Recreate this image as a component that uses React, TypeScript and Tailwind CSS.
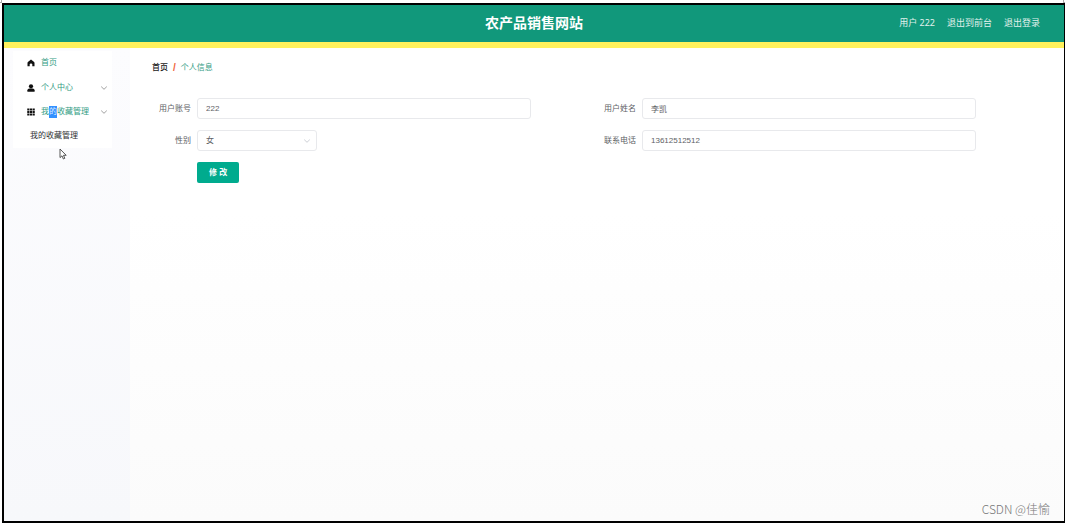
import type { ReactNode } from 'react';

function Chevron({ className }: { className: string }) {
  return (
    <svg viewBox="0 0 8 8" className={className} fill="none" stroke="currentColor" strokeWidth="0.8" aria-hidden="true">
      <path d="M1.2 2.6 4 5.3 6.8 2.6" />
    </svg>
  );
}

function HomeIcon() {
  return (
    <svg viewBox="0 0 16 16" className="size-2 shrink-0" fill="#111" aria-hidden="true">
      <path d="M8 0.8 14.2 6.2Q15 7 15 8.2V14.6H10.6V10.6Q10.6 9 8 9T5.4 10.6V14.6H1V8.2Q1 7 1.8 6.2Z" />
    </svg>
  );
}

function UserIcon() {
  return (
    <svg viewBox="0 0 16 16" className="size-2 shrink-0" fill="#111" aria-hidden="true">
      <circle cx="8" cy="4.6" r="4.2" />
      <path d="M0.8 15.4V12.4Q0.8 9.4 5 9.2H11Q15.2 9.4 15.2 12.4V15.4Z" />
    </svg>
  );
}

function GridIcon() {
  return (
    <svg viewBox="0 0 16 16" className="size-2 shrink-0" fill="#111" aria-hidden="true">
      <path d="M0.5 1H5V5H0.5ZM6 1H10V5H6ZM11 1H15.5V5H11ZM0.5 6H5V10H0.5ZM6 6H10V10H6ZM11 6H15.5V10H11ZM0.5 11H5V15H0.5ZM6 11H10V15H6ZM11 11H15.5V15H11Z" />
    </svg>
  );
}

function MenuRow({ icon, children, expandable }: { icon: ReactNode; children: ReactNode; expandable?: boolean }) {
  return (
    <button type="button" className="flex h-6 w-full items-center bg-white pl-3.5 pr-1 text-left text-[#339c84]">
      {icon}
      <span className="ml-1.5 flex-1 whitespace-nowrap">{children}</span>
      {expandable && <Chevron className="size-2 text-[#888]" />}
    </button>
  );
}

const fieldStyle =
  'h-[21px] rounded-[3px] border border-[#e8e9ec] bg-white px-2 text-[8px] text-[#606266] outline-none';

function Field({ id, label, children }: { id: string; label: string; children: ReactNode }) {
  return (
    <div className="flex items-center">
      <label htmlFor={id} className="w-[45px] shrink-0 pr-1.5 text-right text-[#606266]">
        {label}
      </label>
      {children}
    </div>
  );
}

export default function App() {
  return (
    <div className="relative flex min-h-screen flex-col bg-white pb-px pl-0.5 pt-[3px] font-['Liberation_Sans','Noto_Sans_CJK_SC',sans-serif] text-[8px] leading-3">
      <span className="absolute left-0 top-0 h-[3px] w-0.5 border-b border-r border-[#aaa]" />
      <span className="absolute right-0 top-0 h-[3px] w-0.5 border-b border-l border-[#aaa]" />
      <div className="flex flex-1 flex-col border-2 border-r border-black bg-linear-to-b from-white from-40% to-[#fbfbfb]">
        <header className="grid h-[43px] grid-cols-[1fr_auto_1fr] items-center border-b-6 border-[#fff15c] bg-[#11987b] pb-px text-white">
          <h1 className="col-start-2 text-sm font-bold">农产品销售网站</h1>
          <nav className="flex justify-end gap-3 pr-6 font-['Noto_Sans','Noto_Sans_CJK_SC',sans-serif] text-[9px] text-[#e0f1ec]">
            <span>用户 222</span>
            <a href="#front">退出到前台</a>
            <a href="#logout">退出登录</a>
          </nav>
        </header>

        <div className="flex flex-1">
          <aside className="relative w-[126px] shrink-0 bg-linear-to-b from-[#fcfcfe] to-[#f7f8fb] pl-[9px] pr-[18px] pt-[3px]">
            <nav className="bg-white">
              <MenuRow icon={<HomeIcon />}>首页</MenuRow>
              <div className="pt-px">
                <MenuRow icon={<UserIcon />} expandable>
                  个人中心
                </MenuRow>
              </div>
              <MenuRow icon={<GridIcon />} expandable>
                我<span className="inline-block bg-[#3390ff] text-[#d6e9ff]">的</span>收藏管理
              </MenuRow>
              <a href="#favorites" className="flex h-6 items-center pl-[17px] text-[#303133]">
                我的收藏管理
              </a>
            </nav>
            <svg
              viewBox="0 0 8 12"
              className="absolute left-[55px] top-[100px] h-3 w-2"
              fill="#fff"
              stroke="#444"
              strokeWidth="0.9"
              aria-hidden="true"
            >
              <path d="M1 1V9.6L3 7.8 4.4 11 5.8 10.3 4.5 7.3H7.2Z" />
            </svg>
          </aside>

          <main className="flex flex-1 flex-col px-[22px] pt-3.5">
            <nav aria-label="breadcrumb" className="flex gap-[5px]">
              <a href="#home" className="font-medium text-[#222]">
                首页
              </a>
              <span className="text-[10px] font-bold text-[#f0643c]">/</span>
              <span className="text-[#339c84]">个人信息</span>
            </nav>

            <form className="mt-6 grid grid-cols-2 gap-y-[11px]">
              <Field id="account" label="用户账号">
                <input id="account" defaultValue="222" className={`${fieldStyle} w-3/4`} />
              </Field>
              <Field id="name" label="用户姓名">
                <input id="name" defaultValue="李凯" className={`${fieldStyle} w-3/4`} />
              </Field>
              <Field id="gender" label="性别">
                <div className="grid w-[120px] items-center">
                  <select id="gender" defaultValue="女" className={`${fieldStyle} col-start-1 row-start-1 w-full appearance-none`}>
                    <option>女</option>
                    <option>男</option>
                  </select>
                  <Chevron className="pointer-events-none col-start-1 row-start-1 mr-1.5 size-2 justify-self-end text-[#c0c4cc]" />
                </div>
              </Field>
              <Field id="phone" label="联系电话">
                <input id="phone" defaultValue="13612512512" className={`${fieldStyle} w-3/4`} />
              </Field>
              <div className="pl-[45px]">
                <button type="button" className="block h-[21px] rounded-[2px] bg-[#00ab8e] px-3 font-bold text-white">
                  修 改
                </button>
              </div>
            </form>

            <footer className="-mr-2 mt-auto pb-1 text-right font-['Noto_Sans_CJK_SC',sans-serif] text-xs font-light text-[#777]">
              CSDN @佳愉
            </footer>
          </main>
        </div>
      </div>
    </div>
  );
}
